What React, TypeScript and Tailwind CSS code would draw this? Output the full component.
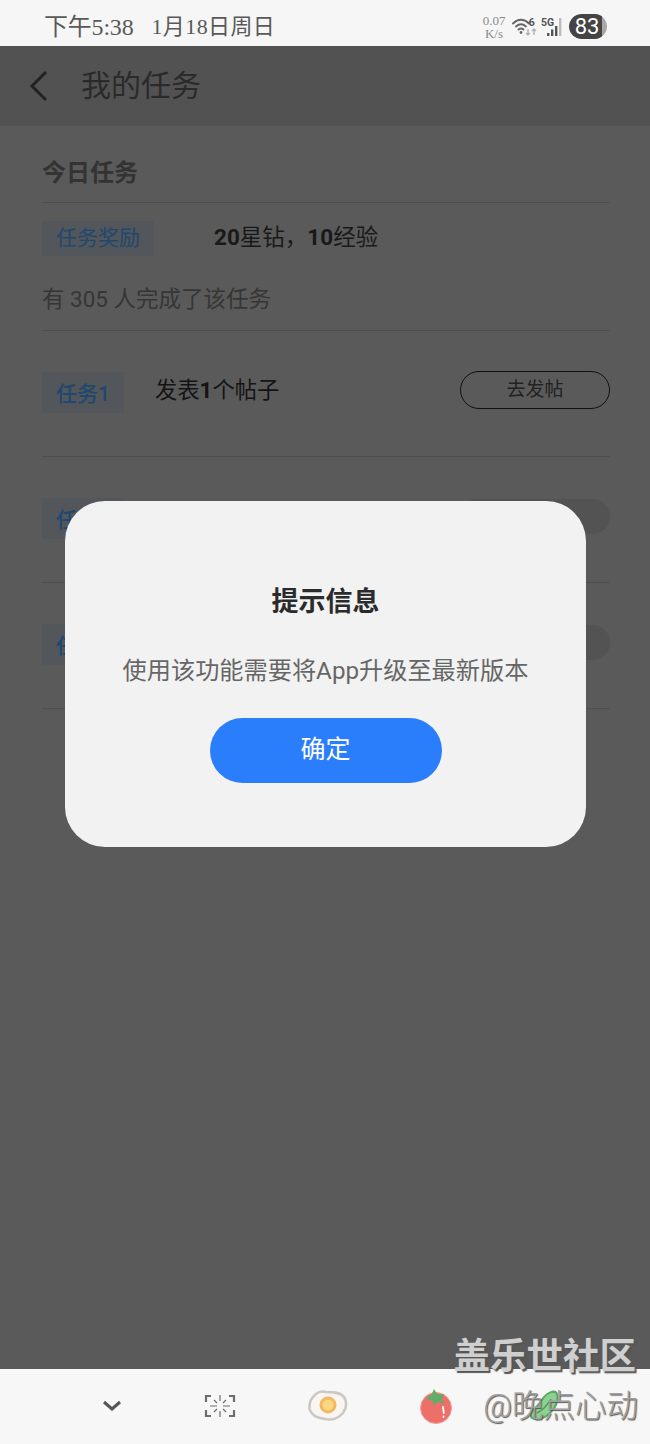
import type React from "react"

const cjk = "font-['Roboto','Noto_Sans_CJK_SC',sans-serif]"

const WifiIcon = () => (
  <svg width="28" height="22" viewBox="0 0 28 22" fill="none">
    <path d="M1 7.500C6 2.500 12 2.500 17 7.500" stroke="#666" strokeWidth="1.900" strokeLinecap="round" />
    <path d="M4 10.500C7.500 7.500 10.500 7.500 14 10.500" stroke="#666" strokeWidth="1.900" strokeLinecap="round" />
    <path d="M6.500 13.500C8.200 12 9.800 12 11.500 13.500" stroke="#666" strokeWidth="1.900" strokeLinecap="round" />
    <circle cx="9" cy="16.500" r="1.400" fill="#666" />
    <text x="16.500" y="9.500" fontSize="11" fontWeight="700" fill="#555" fontFamily="Roboto, sans-serif">6</text>
    <path d="M16 13v6M14 17l2 2 2-2" stroke="#b5b5b5" strokeWidth="1.500" />
    <path d="M22 19v-6M20 15l2-2 2 2" stroke="#b5b5b5" strokeWidth="1.500" />
  </svg>
)

const SignalIcon = () => (
  <svg width="23" height="20" viewBox="0 0 23 20">
    <rect x="6" y="16" width="2.400" height="3" fill="#555" />
    <rect x="10" y="12.500" width="2.400" height="6.500" fill="#555" />
    <rect x="14" y="9" width="2.400" height="10" fill="#555" />
    <rect x="18" y="1" width="2.400" height="18" fill="#bdbdbd" />
    <text x="0" y="9" fontSize="10.500" fontWeight="700" fill="#555" fontFamily="Roboto, sans-serif">5G</text>
  </svg>
)

const ScanIcon = () => (
  <svg width="32" height="24" viewBox="0 0 32 24" fill="none" stroke="#6e6e6e">
    <path d="M7 2H2v6M25 2h5v6M7 22H2v-6M25 22h5v-6" strokeWidth="2.200" />
    <path d="M16 1v6M16 17v6M6 12h7M19 12h7M10 6l3 3M22 6l-3 3M10 18l3-3M22 18l-3-3" strokeWidth="1.200" />
  </svg>
)

const EggIcon = () => (
  <svg width="40" height="32" viewBox="0 0 40 32">
    <path d="M5 7C8 3 13 0.500 18 2c6 0 14 0 18 5 3 5 2.500 11-1 16-4 5-11 7.500-18 6C9 28 3 25 1.500 19 1 14 2.500 10 5 7Z" fill="#f8f6f2" stroke="#cdc6c2" strokeWidth="2.600" />
    <circle cx="20" cy="15" r="8.500" fill="#f4b860" />
    <circle cx="20" cy="15" r="5.500" fill="#f9d77f" />
  </svg>
)

const TomatoIcon = () => (
  <svg width="34" height="36" viewBox="0 0 34 36">
    <circle cx="17" cy="20" r="15.500" fill="#ec6f6a" stroke="#f3a09c" strokeWidth="1" />
    <path d="M6 8l6-.5L15 1l3.500 5.500 7-.5-3 5 3 4.500-7-1.500-4 3.500-1-5.500-6 .5 2.500-4Z" fill="#5fae68" />
    <path d="M24 19l.8 6M24.500 28.500v.6" stroke="#fff" strokeWidth="1.800" strokeLinecap="round" />
  </svg>
)

const CucumberIcon = () => (
  <svg width="32" height="32" viewBox="0 0 32 32" fill="none">
    <path d="M29 4c2 7-2 15-8 20-5 4-12 7-17 4-3-3-1-7 3-10 4-3 6-7 9-11 3-4 11-8 13-3Z" fill="#8ed08f" stroke="#54a860" strokeWidth="2" />
    <path d="M9 23c6-3 10-7 14-14" stroke="#4a9a55" strokeWidth="1.500" />
  </svg>
)

const TaskRow = ({ label, children, button }: { label: string; children?: React.ReactNode; button: React.ReactNode }) => (
  <div className="relative flex h-[126px] items-start border-b border-[#4e4e4e]">
    <div className="mt-[41px] flex h-[41px] w-[82px] shrink-0 items-center bg-[#53565b] pl-[14px] pt-[5px] text-[21px] font-medium text-[#20486e]">
      {label}
    </div>
    {children}
    {button}
  </div>
)

export default function App() {
  return (
    <div className={`relative flex h-[1444px] w-[650px] flex-col overflow-hidden bg-[#5a5a5a] ${cjk}`}>
      {/* status bar */}
      <div className="flex h-[46px] shrink-0 items-center bg-[#f6f6f6] pl-[44px] pr-[43px] pt-[7px] font-['Liberation_Serif','Noto_Sans_CJK_SC',serif] text-[#595959]">
        <span className="text-[24px] leading-none tracking-[-0.2px]">下午5:38</span>
        <span className="ml-[18px] text-[22px] leading-none tracking-[0.4px]">1月18日周日</span>
        <div className="ml-auto flex items-center">
          <div className="flex w-[26px] flex-col items-center text-[13px] leading-[13px] text-[#8a8a8a]">
            <span>0.07</span>
            <span>K/s</span>
          </div>
          <div className="ml-[5px]"><WifiIcon /></div>
          <div className="ml-[1px]"><SignalIcon /></div>
          <div className="ml-[5px] flex h-[25px] w-[38px] overflow-hidden rounded-full bg-[#a8a8a8]">
            <div className="flex h-full w-[33px] items-center justify-center rounded-l-full bg-[#444] pl-[3px] font-['Roboto',sans-serif] text-[22px] text-white">83</div>
          </div>
        </div>
      </div>

      {/* header */}
      <div className="flex h-[80px] shrink-0 items-center bg-[#525252] pl-[29px]">
        <svg width="20" height="32" viewBox="0 0 20 32" fill="none" stroke="#222" strokeWidth="3">
          <path d="M17 2 3 16l14 14" />
        </svg>
        <span className="ml-[32px] text-[30px] leading-none text-[#2a2a2a]">我的任务</span>
      </div>

      {/* task list */}
      <div className="ml-[42px] mr-[40px] flex flex-col">
        <div className="h-[77px] border-b border-[#4e4e4e] pt-[35px] text-[24px] font-bold leading-[24px] text-[#333]">今日任务</div>
        <div className="flex h-[53px] items-end">
          <div className="flex h-[35px] w-[112px] items-center justify-center bg-[#53565b] text-[21px] text-[#20486e]">任务奖励</div>
          <div className="ml-[60px] h-[35px] text-[22.5px] leading-[32px] text-[#191919]">
            <span className="font-bold">20</span>星钻，<span className="font-bold">10</span>经验
          </div>
        </div>
        <div className="flex h-[75px] items-center border-b border-[#4e4e4e] pt-[13px] text-[22.5px] text-[#363636]">有 305 人完成了该任务</div>

        <TaskRow
          label="任务1"
          button={
            <div className="absolute right-0 top-[40px] flex h-[38px] w-[150px] items-center justify-center rounded-full border border-[#111] text-[19px] text-[#222]">去发帖</div>
          }
        >
          <div className="ml-[31px] mt-[45px] text-[22.3px] leading-[28px] text-[#141414]">
            发表<span className="font-bold">1</span>个帖子
          </div>
        </TaskRow>
        <TaskRow label="任务2" button={<div className="absolute right-0 top-[42px] h-[35px] w-[150px] rounded-full bg-[#535353]" />} />
        <TaskRow label="任务3" button={<div className="absolute right-0 top-[42px] h-[35px] w-[150px] rounded-full bg-[#535353]" />} />
      </div>

      {/* bottom bar */}
      <div className="mt-auto grid h-[75px] shrink-0 grid-cols-[repeat(5,108px)] items-center bg-[#f7f7f7] px-[58px] pb-[1px]">
        <div className="flex justify-center">
          <svg width="20" height="12" viewBox="0 0 20 12" fill="none" stroke="#555" strokeWidth="3">
            <path d="M2 2l8 7 8-7" />
          </svg>
        </div>
        <div className="flex justify-center"><ScanIcon /></div>
        <div className="flex justify-center"><EggIcon /></div>
        <div className="flex justify-center"><TomatoIcon /></div>
        <div className="flex justify-center"><CucumberIcon /></div>
      </div>

      {/* dialog */}
      <div className="absolute left-[65px] top-[501px] flex h-[346px] w-[521px] flex-col items-center rounded-[40px] bg-[#f2f2f2]">
        <div className="mt-[83px] text-[27px] font-bold leading-[36px] text-[#2b2b2b]">提示信息</div>
        <div className="mt-[34px] text-[24.2px] leading-[34px] text-[#666]">使用该功能需要将App升级至最新版本</div>
        <div className="mt-[30px] flex h-[65px] w-[232px] items-center justify-center rounded-full bg-[#2a7dfb] pb-[2px] text-[25px] text-white">确定</div>
      </div>

      {/* watermark */}
      <div className="absolute right-[14px] top-[1335px] text-[36.500px] font-bold leading-[44px] text-[#cfcfcf] [text-shadow:2px_2px_1px_#555]">盖乐世社区</div>
      <div className="absolute right-[12px] top-[1389px] text-[31.500px] font-light leading-[36px] text-[#a0a0a0] [text-shadow:1px_1px_1px_#555]">@晚点心动</div>
    </div>
  )
}
